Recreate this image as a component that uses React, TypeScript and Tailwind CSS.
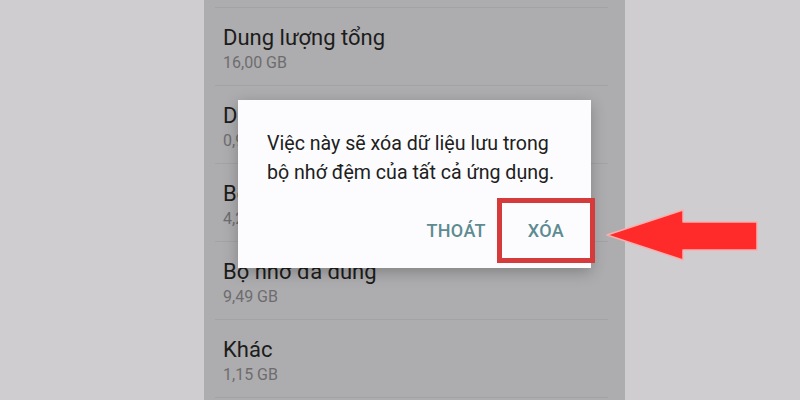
import React from "react";

const items = [
  { title: "Dung lượng tổng", size: "16,00 GB" },
  { title: "Dung lượng trống", size: "0,93 GB" },
  { title: "Bộ nhớ đệm", size: "4,27 GB" },
  { title: "Bộ nhớ đã dùng", size: "9,49 GB" },
  { title: "Khác", size: "1,15 GB" },
];

function Row({ title, size }: { title: string; size: string }) {
  return (
    <div className="h-[78px] border-b border-[#a3a2a4] px-[8px] pt-[17px]">
      <div className="whitespace-nowrap text-[22px] leading-[26px] text-[#1c1c1c]">{title}</div>
      <div className="mt-[3px] text-[16px] leading-[18px] text-[#6d6c6e]">{size}</div>
    </div>
  );
}

function Arrow() {
  return (
    <svg
      className="absolute left-[600px] top-[200px]"
      width="166"
      height="70"
      viewBox="600 200 166 70"
    >
      <polygon
        points="607,235 683,210 683,222 757,222 757,250 683,250 683,260"
        fill="#ff2b2b"
        stroke="#f7b0b0"
        strokeWidth="1.5"
        strokeLinejoin="round"
      />
    </svg>
  );
}

export default function App() {
  return (
    <div
      className="relative h-[400px] w-[800px] overflow-hidden bg-[#cfcdd0]"
      style={{ fontFamily: "Roboto, 'Noto Sans', sans-serif" }}
    >
      <div className="relative ml-[204px] h-full w-[421px] bg-[#adacae] pt-[7px]">
        <div className="ml-[11px] mr-[17px] border-t border-[#a3a2a4]">
          {items.map((it) => (
            <Row key={it.title} title={it.title} size={it.size} />
          ))}
        </div>

        {/* dialog */}
        <div className="absolute left-[34px] top-[100px] flex h-[168px] w-[353px] flex-col bg-[#fcfcfe] shadow-[0_4px_14px_rgba(0,0,0,0.25)]">
          <p className="px-[29px] pt-[29px] text-[19.6px] leading-[29px] text-[#202020]">
            Việc này sẽ xóa dữ liệu lưu trong bộ nhớ đệm của tất cả ứng dụng.
          </p>
          <div className="mb-[6px] mt-auto flex h-[64px] items-center justify-end pr-[27px] text-[18px] font-medium tracking-[0.3px] text-[#5d8b91]">
            <span className="mr-[42px]">THOÁT</span>
            <span>XÓA</span>
          </div>
        </div>

        {/* highlight box */}
        <div className="absolute left-[293px] top-[198px] h-[65px] w-[98px] border-[5px] border-[#d63b3b]" />
      </div>
      <Arrow />
    </div>
  );
}
